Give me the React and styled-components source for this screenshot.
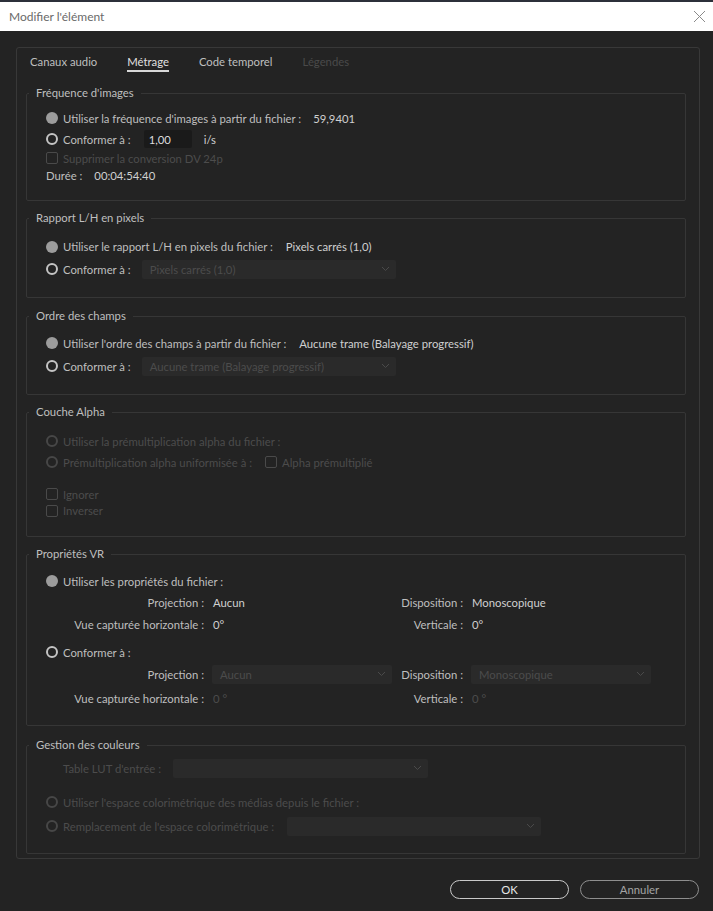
import React from "react";
import styled, { createGlobalStyle, css } from "styled-components";

const FONT = `"Lato", "Open Sans", sans-serif`;

const GlobalStyle = createGlobalStyle`
  html, body { margin: 0; padding: 0; background: #232323; }
  body { font-family: ${FONT}; font-size: 11.3px; color: #bfbfbf; }
  * { box-sizing: border-box; }
`;

const Window = styled.div`
  width: 713px;
  height: 911px;
  display: flex;
  flex-direction: column;
  background: #232323;
  overflow: hidden;
`;

const TopStrip = styled.div`
  height: 2px;
  background: #2c303a;
`;

const TitleBar = styled.div`
  height: 29px;
  background: #ffffff;
  display: flex;
  align-items: center;
  justify-content: space-between;
  padding: 0 7px 0 9px;
  color: #6a6a6a;
  font-size: 12px;
`;

const CloseIcon = () => (
  <svg width="13" height="13" viewBox="0 0 13 13">
    <path d="M1 1 L12 12 M12 1 L1 12" stroke="#8a8a8a" strokeWidth="1" fill="none" />
  </svg>
);

const Body = styled.div`
  flex: 1;
  display: flex;
  flex-direction: column;
  padding: 16px 13px 0 16px;
`;

const Panel = styled.div`
  border: 1px solid #383838;
  border-radius: 3px;
  padding: 0 13px 4px 9px;
  display: flex;
  flex-direction: column;
`;

const Tabs = styled.div`
  display: flex;
  gap: 30px;
  padding: 6px 0 0 4px;
`;

const Tab = styled.div`
  line-height: 16px;
  border-bottom: 2px solid ${(p) => (p.$active ? "#d8d8d8" : "transparent")};
  color: ${(p) => (p.$disabled ? "#4a4a4a" : p.$active ? "#e0e0e0" : "#bfbfbf")};
`;

const Group = styled.fieldset`
  margin: ${(p) => p.$mt ?? 9}px 0 0 0;
  padding: ${(p) => p.$pt}px 0 ${(p) => p.$pb}px 2px;
  border: 1px solid #363636;
  border-radius: 2px;
  min-width: 0;
`;

const Legend = styled.legend`
  margin-left: 0;
  padding: 0 7px;
  line-height: 16px;
  color: #bfbfbf;
`;

const GroupBody = styled.div`
  padding-left: 17px;
  display: flex;
  flex-direction: column;
`;

const Row = styled.div`
  display: flex;
  align-items: center;
  height: ${(p) => p.$h ?? 20}px;
  margin-top: ${(p) => p.$mt ?? 0}px;
  padding-left: ${(p) => p.$indent ?? 0}px;
`;

const Label = styled.span`
  color: ${(p) => (p.$disabled ? "#4c4c4c" : "#bfbfbf")};
  white-space: nowrap;
`;

const Value = styled.span`
  color: ${(p) => (p.$disabled ? "#4c4c4c" : "#d0d0d0")};
  margin-left: ${(p) => p.$ml ?? 12}px;
  white-space: nowrap;
`;

const Radio = styled.span`
  width: 12px;
  height: 12px;
  border-radius: 50%;
  flex: none;
  margin-right: 5px;
  ${(p) =>
    p.$checked
      ? css`
          background: #9c9c9c;
        `
      : css`
          border: 2px solid ${p.$disabled ? "#474747" : "#c4c4c4"};
        `}
`;

const Check = styled.span`
  width: 12px;
  height: 12px;
  border: 1px solid #4a4a4a;
  border-radius: 2px;
  flex: none;
  margin-right: 5px;
  margin-left: ${(p) => p.$ml ?? 0}px;
`;

const NumInput = styled.div`
  width: 48px;
  height: 18px;
  margin-left: 13px;
  background: #1a1a1a;
  border-radius: 2px;
  display: flex;
  align-items: center;
  padding-left: 5px;
  color: #dcdcdc;
`;

const SelectBox = styled.div`
  width: ${(p) => p.$w}px;
  height: 19px;
  margin-left: ${(p) => p.$ml ?? 0}px;
  background: #2a2a2a;
  border-radius: 2px;
  display: flex;
  align-items: center;
  justify-content: space-between;
  padding: 0 6px 0 8px;
  color: #4c4c4c;
  white-space: nowrap;
`;

const Chevron = () => (
  <svg width="9" height="6" viewBox="0 0 9 6">
    <path d="M1 1 L4.5 4.5 L8 1" stroke="#4a4a4a" strokeWidth="1" fill="none" />
  </svg>
);

const Select = ({ w, ml, children }) => (
  <SelectBox $w={w} $ml={ml}>
    <span>{children}</span>
    <Chevron />
  </SelectBox>
);

const VRGrid = styled.div`
  display: grid;
  grid-template-columns: 166px 180px 79px 180px;
  grid-template-rows: ${(p) => p.$rows};
  align-items: center;
`;

const GLabel = styled.span`
  text-align: right;
  padding-right: 8px;
  color: #bfbfbf;
  white-space: nowrap;
`;

const GValue = styled.span`
  color: ${(p) => (p.$disabled ? "#4c4c4c" : "#d0d0d0")};
  padding-left: 1px;
  white-space: nowrap;
`;

const Footer = styled.div`
  display: flex;
  justify-content: flex-end;
  gap: 11px;
  margin-top: 21px;
  padding-right: 1px;
`;

const Button = styled.button`
  width: 119px;
  height: 19px;
  border-radius: 10px;
  background: transparent;
  font-family: ${FONT};
  font-size: 11.3px;
  padding: 0;
  border: 1px solid ${(p) => (p.$primary ? "#c8c8c8" : "#8e8e8e")};
  color: ${(p) => (p.$primary ? "#e6e6e6" : "#a4a4a4")};
`;

export default function App() {
  return (
    <>
      <GlobalStyle />
      <Window>
        <TopStrip />
        <TitleBar>
          <span>Modifier l'élément</span>
          <CloseIcon />
        </TitleBar>
        <Body>
          <Panel>
            <Tabs>
              <Tab>Canaux audio</Tab>
              <Tab $active>Métrage</Tab>
              <Tab>Code temporel</Tab>
              <Tab $disabled>Légendes</Tab>
            </Tabs>

            <Group $mt={13} $pt={7} $pb={16}>
              <Legend>Fréquence d'images</Legend>
              <GroupBody>
                <Row $h={20}>
                  <Radio $checked />
                  <Label>Utiliser la fréquence d'images à partir du fichier :</Label>
                  <Value>59,9401</Value>
                </Row>
                <Row $h={22}>
                  <Radio />
                  <Label>Conformer à :</Label>
                  <NumInput>1,00</NumInput>
                  <Value $ml={12}>i/s</Value>
                </Row>
                <Row $h={16}>
                  <Check />
                  <Label $disabled>Supprimer la conversion DV 24p</Label>
                </Row>
                <Row $h={18}>
                  <Label>Durée :</Label>
                  <Value>00:04:54:40</Value>
                </Row>
              </GroupBody>
            </Group>

            <Group $pt={10} $pb={16}>
              <Legend>Rapport L/H en pixels</Legend>
              <GroupBody>
                <Row $h={21}>
                  <Radio $checked />
                  <Label>Utiliser le rapport L/H en pixels du fichier :</Label>
                  <Value $ml={13}>Pixels carrés (1,0)</Value>
                </Row>
                <Row $h={24}>
                  <Radio />
                  <Label>Conformer à :</Label>
                  <Select w={254} ml={11}>Pixels carrés (1,0)</Select>
                </Row>
              </GroupBody>
            </Group>

            <Group $mt={10} $pt={9} $pb={15}>
              <Legend>Ordre des champs</Legend>
              <GroupBody>
                <Row $h={20}>
                  <Radio $checked />
                  <Label>Utiliser l'ordre des champs à partir du fichier :</Label>
                  <Value $ml={13}>Aucune trame (Balayage progressif)</Value>
                </Row>
                <Row $h={26}>
                  <Radio />
                  <Label>Conformer à :</Label>
                  <Select w={254} ml={11}>Aucune trame (Balayage progressif)</Select>
                </Row>
              </GroupBody>
            </Group>

            <Group $pt={11} $pb={17}>
              <Legend>Couche Alpha</Legend>
              <GroupBody>
                <Row $h={20}>
                  <Radio $disabled />
                  <Label $disabled>Utiliser la prémultiplication alpha du fichier :</Label>
                </Row>
                <Row $h={22}>
                  <Radio $disabled />
                  <Label $disabled>Prémultiplication alpha uniformisée à :</Label>
                  <Check $ml={13} />
                  <Label $disabled>Alpha prémultiplié</Label>
                </Row>
                <Row $h={16} $mt={13}>
                  <Check />
                  <Label $disabled>Ignorer</Label>
                </Row>
                <Row $h={17}>
                  <Check />
                  <Label $disabled>Inverser</Label>
                </Row>
              </GroupBody>
            </Group>

            <Group $pt={9} $pb={14}>
              <Legend>Propriétés VR</Legend>
              <GroupBody>
                <Row $h={20}>
                  <Radio $checked />
                  <Label>Utiliser les propriétés du fichier :</Label>
                </Row>
                <VRGrid $rows="22px 22px">
                  <GLabel>Projection :</GLabel>
                  <GValue>Aucun</GValue>
                  <GLabel>Disposition :</GLabel>
                  <GValue>Monoscopique</GValue>
                  <GLabel>Vue capturée horizontale :</GLabel>
                  <GValue>0°</GValue>
                  <GLabel>Verticale :</GLabel>
                  <GValue>0°</GValue>
                </VRGrid>
                <Row $h={22} $mt={6}>
                  <Radio />
                  <Label>Conformer à :</Label>
                </Row>
                <VRGrid $rows="22px 26px">
                  <GLabel>Projection :</GLabel>
                  <Select w={180}>Aucun</Select>
                  <GLabel>Disposition :</GLabel>
                  <Select w={180}>Monoscopique</Select>
                  <GLabel>Vue capturée horizontale :</GLabel>
                  <GValue $disabled>0 °</GValue>
                  <GLabel>Verticale :</GLabel>
                  <GValue $disabled>0 °</GValue>
                </VRGrid>
              </GroupBody>
            </Group>

            <Group $mt={11} $pt={5} $pb={16}>
              <Legend>Gestion des couleurs</Legend>
              <GroupBody>
                <Row $h={20} $indent={17}>
                  <Label $disabled>Table LUT d'entrée :</Label>
                  <Select w={255} ml={12}></Select>
                </Row>
                <Row $h={20} $mt={14}>
                  <Radio $disabled />
                  <Label $disabled>Utiliser l'espace colorimétrique des médias depuis le fichier :</Label>
                </Row>
                <Row $h={22} $mt={3}>
                  <Radio $disabled />
                  <Label $disabled>Remplacement de l'espace colorimétrique :</Label>
                  <Select w={254} ml={13}></Select>
                </Row>
              </GroupBody>
            </Group>
          </Panel>
          <Footer>
            <Button $primary>OK</Button>
            <Button>Annuler</Button>
          </Footer>
        </Body>
      </Window>
    </>
  );
}
